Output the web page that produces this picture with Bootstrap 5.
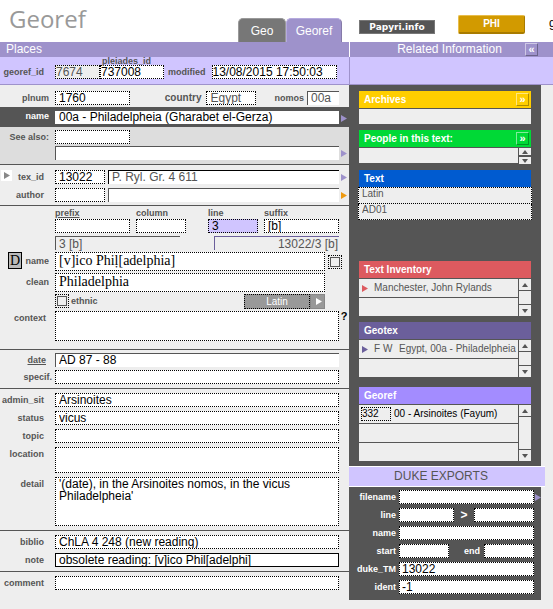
<!DOCTYPE html>
<html lang="en">
<head>
<meta charset="utf-8">
<meta name="viewport" content="width=device-width, initial-scale=1">
<title>Georef</title>
<link href="https://cdn.jsdelivr.net/npm/bootstrap@5.3.0/dist/css/bootstrap.min.css" rel="stylesheet">
<style>
:root{--violet:#9e92cb;--lilac:#d0c5ff;--dark:#555;--paper:#eee}
body{font:12px/14px "Liberation Sans",Arial,sans-serif;background:var(--paper);color:#000;overflow-x:hidden}
a{color:inherit;text-decoration:none}
button{border:0;padding:0;background:none;color:inherit;line-height:1}
svg{display:block}
.side{flex:0 0 204px;width:204px}
.main-col{flex:1 1 0;min-width:0}
/* header */
.top-bar{height:42px;background:#fff}
.brand{font:500 24px/38px "Open Sans","Noto Sans",sans-serif;color:#999;margin:0;padding-left:9px}
.tab{height:24px;line-height:25px;color:#fff;background:#777;border-radius:5px 5px 0 0;border:1px solid #999;border-width:1px 1px 0;text-align:center;width:48px}
.tab.on{width:56px;background:var(--violet);border-color:#b5aade #857aa8 #857aa8 #b5aade;margin-right:7px}
.site-links{padding-left:10px;overflow:hidden;white-space:nowrap;height:34px}
.papyri{font:bold 9px/12px "DejaVu Sans",sans-serif;color:#fff;background:var(--dark);border:1px solid #777;width:76px;height:14px;margin-right:23px}
.phi{font-size:10px;font-weight:bold;line-height:16px;color:#fff;background:#d29a00;border:1px solid #e8bd4a;border-bottom:2px solid #a87b00;border-right-color:#a87b00;border-radius:2px;width:67px;height:19px;margin-right:24px}
.cut{line-height:22px}
/* title bands */
.band{background:var(--violet);color:#fff;height:15px;line-height:15px}
.band.main-col{padding-left:6px}
.sub-band{background:var(--lilac);height:28px;border-bottom:1px solid var(--violet)}
.band.side{border-left:1px solid #fff;padding:0 15px 0 24px}
.sub-band.side{border-left:1px solid var(--violet)}
.sq{width:13px;height:13px;font-weight:bold;font-size:11px;line-height:9px;color:#fff;border:1px solid;border-color:#ffffff80 #00000050 #00000050 #ffffff80;flex:none}
/* form */
.lbl{font-size:9px;line-height:14px;font-weight:bold;color:var(--dark);white-space:nowrap}
.lead-lbl{width:55px;flex:none;text-align:right;padding-right:11px}
.lead-lbl.near{padding-right:6px}
.lead-lbl.ctx{padding-right:9px}
.lead-lbl.spec{padding-right:3px}
.fld{display:block;font:12px/12px "Liberation Sans",Arial,sans-serif;height:14px;padding:0 3px 1px;border:1px dotted #000;border-radius:0;background:#fff;color:#000;min-width:0;outline:0;resize:none;overflow:hidden}
.fld.tight{padding-left:0}
.fld.ink{border:1px solid var(--dark);border-width:1px 0 0 1px}
.fld.dim{color:var(--dark)}
.fld.lit{background:var(--lilac)}
.fld.locked{background:var(--paper)}
.fld.active-fld{border-style:solid}
.fld.black-top{border-color:#000}
.fld.serif{font:14px/17px "Liberation Serif","Times New Roman",serif;height:19px;padding-bottom:1px}
.grow{flex:1 1 0}
.w30{width:32px}.w45{width:45px}.w50{width:50px}.w55{width:55px}.w60{width:60px}.w65{width:64px}.w75{width:75px}
.h26{height:26px}.h30{height:30px}.h49{height:49px}
.tail{width:10px;flex:none;padding:4px 0 0 2px}
.violet{color:var(--violet)}.orange{color:#ee9a10}
.sec{display:flex;flex-direction:column;gap:4px;padding:4px 0;border-bottom:1px solid var(--dark)}
.frow{display:flex;align-items:flex-start}
.pleiades{line-height:8px;height:8px;padding-left:2px}
.modified{margin:0 2px}
.place{padding:6px 0 2px}
.country{font-size:10px;padding-right:5px}
.nomos{padding:0 3px 0 18px}
.name-bar{background:var(--dark);padding:4px 0 3px}
.name-bar .fld{height:13px;border:0;padding:0 4px 1px}
.name-bar .lbl{color:#fff;line-height:11px}
.also{background:#ddd;gap:2px;padding:3px 0 4px}
.text-sec{padding:5px 0 3px}
.text-sec .w50{margin-right:3px}
.mini{width:11px;height:11px;background:#fff;color:#888;padding:0 0 0 3px;margin-left:1px}
.lead-lbl.tex{width:43px}
.attest{gap:2px;padding:1px 0 8px}
.gap6{gap:6px}
.attest .w50>.lbl,.attest .w75>.lbl{display:block;line-height:12px}
.out{flex:0 0 125px;border-top:1px solid var(--dark);height:14px;padding:0 3px;color:var(--dark);margin-top:1px}
.border-dim{border-left:1px solid var(--dark)}
.border-violet{border-left:1px solid #6b5f9b;border-top-color:#6b5f9b;padding-right:1px}
.lbl.tall{line-height:18px}
.lead-lbl.beside{width:33px}
.box-tick{width:14px;height:14px;border:1px dotted #000;padding:1px;flex:none}
.box-tick input{appearance:none;display:block;width:10px;height:10px;margin:0;border:1px solid var(--dark);background:var(--paper)}
.side-tick{margin:3px 7px 0 3px}
.me-tick{margin-right:24px}
.eth .lbl{padding-left:2px}
.diac{font:14px/14px "Liberation Serif",serif;width:14px;height:17px;background:#bbb;border:1px solid #000;margin-left:8px}
.lang{appearance:none;font:10px/13px "Liberation Sans",sans-serif;width:66px;height:15px;background:#999;color:#fff;border:1px dotted #000;border-radius:0;padding:0;text-align:center}
.lang-go{width:15px;height:15px;background:#999;border:1px solid #888;padding-left:5px}
.help{color:#000;font-weight:bold;font-size:11px;padding:0}
.date-sec{gap:3px;padding-top:3px}
/* related panels */
.related{background:var(--dark);width:192px;padding:6px 10px 5px}
.cap-bar{height:17px;line-height:16px;padding:0 2px 0 5px;font-size:10px;font-weight:bold;color:#fff;margin:0 0 1px;display:flex;align-items:center;justify-content:space-between}
.gold{background:#ffce00}.green{background:#00d936}.blue{background:#005bd0}.red{background:#dd5a5f}.indigo{background:#6b5f9b}.lav{background:#a38cff}
.red-ink{color:#dd5a5f}.indigo-ink{color:#6b5f9b}
.gap-s{margin-top:6px}.gap-m{margin-top:10px}.gap-l{margin-top:41px}
.pane{display:flex;background:var(--dark);gap:1px;font-size:10px;color:var(--dark)}
.rows{flex:1;min-width:0;display:flex;flex-direction:column;gap:1px;margin:0;padding:0;list-style:none}
.rows li{height:18px;background:var(--paper);line-height:18px;white-space:nowrap;display:flex;align-items:center}
.rows.low li{height:15px}
.scr{width:12px;background:var(--paper);display:flex;flex-direction:column;justify-content:space-between}
.scr button{height:12px;display:flex;align-items:center;justify-content:center}
.scr button:first-child{border-bottom:1px solid var(--dark)}
.scr button:last-child{border-top:1px solid var(--dark)}
.scr.short button{height:8px}
.go{padding:0 6px 0 3px}
.fw-col{width:25px}
.ref-no{width:30px;font-size:10px;margin:0 3px 0 2px}
.meta{font-size:10px;background:var(--paper);color:var(--dark);height:17px;margin:0 -1px;width:174px;padding:0 3px 4px}
.meta+.meta{border-top:0;height:16px}
.duke-title{width:196px;height:21px;margin:0;background:var(--lilac);border:1px solid #fff;border-width:1px 0;font-size:12px;line-height:19px;font-weight:normal;color:var(--dark);text-align:center;padding-right:12px}
.duke{background:var(--dark);width:192px;padding:3px 0 6px;display:flex;flex-direction:column;gap:4px}
.duke .lbl{color:#fff}
.duke .lead-lbl{width:50px;padding-right:3px}
.duke .tail{width:7px;padding-left:1px}
.duke .pad2{padding-left:2px}
</style>
</head>
<body>
<svg width="0" height="0" class="position-absolute" aria-hidden="true">
  <symbol id="play" viewBox="0 0 6 7"><path d="M0 0L6 3.5L0 7Z" fill="currentColor"/></symbol>
  <symbol id="up" viewBox="0 0 6 4"><path d="M0 4L3 0L6 4Z" fill="currentColor"/></symbol>
  <symbol id="down" viewBox="0 0 6 4"><path d="M0 0L3 4L6 0Z" fill="currentColor"/></symbol>
</svg>

<header class="top-bar d-flex">
  <div class="main-col d-flex justify-content-between">
    <h1 class="brand">Georef</h1>
    <nav class="d-flex align-items-end" aria-label="Files"><a class="tab" href="#">Geo</a><a class="tab on" href="#">Georef</a></nav>
  </div>
  <div class="side site-links d-flex align-items-end">
    <button class="papyri flex-shrink-0">Papyri.info</button><button class="phi flex-shrink-0">PHI</button><span class="cut">g</span>
  </div>
</header>

<div class="d-flex">
  <div class="band main-col">Places</div>
  <div class="band side d-flex align-items-center"><span class="flex-grow-1 text-center">Related Information</span><button class="sq" aria-label="Collapse">«</button></div>
</div>
<div class="d-flex">
  <div class="sub-band main-col frow">
    <label class="lbl lead-lbl mt-2" for="gid">georef_id</label>
    <input class="fld tight dim locked w45 mt-2" id="gid" value="7674" readonly>
    <div class="w65"><label class="lbl d-block pleiades" for="pid">pleiades_id</label><input class="fld tight w-100" id="pid" value="737008"></div>
    <label class="lbl mt-2 px-1" for="mod">modified</label>
    <input class="fld tight grow mt-2 modified" id="mod" value="13/08/2015 17:50:03"><span class="tail"></span>
  </div>
  <div class="sub-band side"></div>
</div>

<div class="d-flex align-items-start">
<main class="main-col">
  <div class="frow place">
    <label class="lbl lead-lbl near" for="pln">plnum</label><input class="fld w75" id="pln" value="1760">
    <div class="grow d-flex justify-content-end">
      <label class="lbl country" for="cty">country</label><input class="fld dim w50" id="cty" value="Egypt">
      <label class="lbl nomos" for="nom">nomos</label><input class="fld ink dim w30" id="nom" value="00a">
    </div><span class="tail"></span>
  </div>
  <div class="frow name-bar">
    <label class="lbl lead-lbl near" for="nm">name</label><input class="fld grow" id="nm" value="00a - Philadelpheia (Gharabet el-Gerza)">
    <button class="tail violet" aria-label="Open place"><svg width="6" height="7"><use href="#play"/></svg></button>
  </div>
  <div class="sec also">
    <div class="frow"><label class="lbl lead-lbl near" for="sa">See also:</label><input class="fld w75" id="sa"></div>
    <div class="frow"><span class="lead-lbl"></span><input class="fld ink grow" aria-label="See also name"><button class="tail violet" aria-label="Open see also"><svg width="6" height="7"><use href="#play"/></svg></button></div>
  </div>
  <div class="sec text-sec">
    <div class="frow">
      <button class="mini" aria-label="Go to text"><svg width="6" height="7"><use href="#play"/></svg></button>
      <label class="lbl lead-lbl tex" for="tx">tex_id</label><input class="fld w50" id="tx" value="13022">
      <input class="fld ink dim grow black-top" aria-label="Text title" value="P. Ryl. Gr. 4 611"><button class="tail violet" aria-label="Open text"><svg width="6" height="7"><use href="#play"/></svg></button>
    </div>
    <div class="frow"><label class="lbl lead-lbl" for="au">author</label><input class="fld w50" id="au"><input class="fld ink grow" aria-label="Author name"><button class="tail orange" aria-label="Open author"><svg width="6" height="7"><use href="#play"/></svg></button></div>
  </div>

  <div class="sec attest">
    <div class="frow"><span class="lead-lbl"></span>
      <div class="grow d-flex justify-content-between">
        <div class="d-flex gap6">
          <div class="w75"><label class="lbl text-decoration-underline" for="pre">prefix</label><input class="fld w-100" id="pre"></div>
          <div class="w50"><label class="lbl" for="clm">column</label><input class="fld w-100" id="clm"></div>
        </div>
        <div class="d-flex gap6">
          <div class="w50"><label class="lbl" for="lin">line</label><input class="fld w-100 lit" id="lin" value="3"></div>
          <div class="w75"><label class="lbl" for="suf">suffix</label><input class="fld w-100" id="suf" value="[b]"></div>
        </div>
      </div><span class="tail"></span>
    </div>
    <div class="frow"><span class="lead-lbl"></span>
      <div class="grow d-flex justify-content-between"><output class="out border-dim">3 [b]</output><output class="out border-violet text-end">13022/3 [b]</output></div><span class="tail"></span>
    </div>
    <div class="frow">
      <button class="diac">D</button><label class="lbl lead-lbl near beside tall" for="an">name</label>
      <input class="fld serif grow" id="an" value="[v]ico Phiḷ[adelphia]">
      <span class="box-tick side-tick"><input type="checkbox" aria-label="Name checked"></span>
    </div>
    <div class="frow"><label class="lbl lead-lbl near tall" for="cl">clean</label><input class="fld serif grow me-tick" id="cl" value="Philadelphia"></div>
    <div class="frow eth"><span class="lead-lbl"></span>
      <span class="box-tick"><input type="checkbox" id="eth"></span><label class="lbl" for="eth">ethnic</label>
      <select class="lang ms-auto" aria-label="Language"><option>Latin</option></select><button class="lang-go me-tick" aria-label="Next language"><svg width="6" height="7" class="text-white"><use href="#play"/></svg></button>
    </div>
    <div class="frow"><label class="lbl lead-lbl ctx" for="ctx">context</label><textarea class="fld grow h30" id="ctx"></textarea><button class="tail help">?</button></div>
  </div>

  <div class="sec date-sec">
    <div class="frow"><label class="lbl lead-lbl ctx text-decoration-underline" for="dt">date</label><input class="fld ink grow" id="dt" value="AD 87 - 88"><span class="tail"></span></div>
    <div class="frow"><label class="lbl lead-lbl spec" for="sp">specif.</label><input class="fld grow" id="sp"><span class="tail"></span></div>
  </div>
  <div class="sec">
    <div class="frow"><label class="lbl lead-lbl" for="ad">admin_sit</label><input class="fld grow" id="ad" value="Arsinoites"><span class="tail"></span></div>
    <div class="frow"><label class="lbl lead-lbl" for="st">status</label><input class="fld grow" id="st" value="vicus"><span class="tail"></span></div>
    <div class="frow"><label class="lbl lead-lbl" for="to">topic</label><input class="fld grow" id="to"><span class="tail"></span></div>
    <div class="frow"><label class="lbl lead-lbl" for="lo">location</label><textarea class="fld grow h26" id="lo"></textarea><span class="tail"></span></div>
    <div class="frow"><label class="lbl lead-lbl" for="de">detail</label><textarea class="fld grow h49" id="de">'(date), in the Arsinoites nomos, in the vicus Philadelpheia'</textarea><span class="tail"></span></div>
  </div>
  <div class="sec">
    <div class="frow"><label class="lbl lead-lbl" for="bi">biblio</label><input class="fld grow" id="bi" value="ChLA 4 248 (new reading)"><span class="tail"></span></div>
    <div class="frow"><label class="lbl lead-lbl" for="no">note</label><input class="fld grow active-fld" id="no" value="obsolete reading: [v]ico Phil[adelphi]"><span class="tail"></span></div>
  </div>
  <div class="sec border-0">
    <div class="frow"><label class="lbl lead-lbl" for="co">comment</label><input class="fld grow" id="co"><span class="tail"></span></div>
  </div>
</main>

<aside class="side">
  <div class="related">
    <section><h2 class="cap-bar gold">Archives<button class="sq" aria-label="Open archives">»</button></h2>
      <div class="pane"><ul class="rows low"><li></li></ul></div></section>
    <section class="gap-s"><h2 class="cap-bar green">People in this text:<button class="sq" aria-label="Open people">»</button></h2>
      <div class="pane"><ul class="rows low"><li></li></ul>
        <div class="scr short"><button aria-label="Up"><svg width="6" height="4"><use href="#up"/></svg></button><button aria-label="Down"><svg width="6" height="4"><use href="#down"/></svg></button></div></div></section>
    <section class="gap-s"><h2 class="cap-bar blue mb-0">Text</h2>
      <input class="fld meta" aria-label="Language of text" value="Latin"><input class="fld meta" aria-label="Date code" value="AD01"></section>
    <section class="gap-l"><h2 class="cap-bar red">Text Inventory</h2>
      <div class="pane"><ul class="rows"><li><a class="go red-ink" href="#" aria-label="Open inventory"><svg width="6" height="7"><use href="#play"/></svg></a>Manchester, John Rylands</li><li></li></ul>
        <div class="scr"><button aria-label="Up"><svg width="6" height="4"><use href="#up"/></svg></button><button aria-label="Down"><svg width="6" height="4"><use href="#down"/></svg></button></div></div></section>
    <section class="gap-s"><h2 class="cap-bar indigo">Geotex</h2>
      <div class="pane"><ul class="rows"><li><a class="go indigo-ink" href="#" aria-label="Open geotex"><svg width="6" height="7"><use href="#play"/></svg></a><span class="fw-col">F W</span>Egypt, 00a - Philadelpheia</li><li></li></ul>
        <div class="scr"><button aria-label="Up"><svg width="6" height="4"><use href="#up"/></svg></button><button aria-label="Down"><svg width="6" height="4"><use href="#down"/></svg></button></div></div></section>
    <section class="gap-m"><h2 class="cap-bar lav">Georef</h2>
      <div class="pane"><ul class="rows text-black"><li><input class="fld tight locked ref-no" aria-label="Georef number" value="332">00 - Arsinoites (Fayum)</li><li></li><li></li></ul>
        <div class="scr"><button aria-label="Up"><svg width="6" height="4"><use href="#up"/></svg></button><button aria-label="Down"><svg width="6" height="4"><use href="#down"/></svg></button></div></div></section>
  </div>
  <h2 class="duke-title">DUKE EXPORTS</h2>
  <div class="duke">
    <div class="frow"><label class="lbl lead-lbl" for="fn">filename</label><input class="fld grow" id="fn"><button class="tail violet" aria-label="Open file"><svg width="6" height="7"><use href="#play"/></svg></button></div>
    <div class="frow"><label class="lbl lead-lbl" for="dl">line</label><input class="fld w55" id="dl"><span class="grow text-center text-white fw-bold">&gt;</span><input class="fld w60" aria-label="Last line"><span class="tail"></span></div>
    <div class="frow"><label class="lbl lead-lbl" for="dn">name</label><input class="fld grow" id="dn"><span class="tail"></span></div>
    <div class="frow"><label class="lbl lead-lbl" for="ds">start</label><input class="fld w50" id="ds"><label class="lbl grow text-end pe-1" for="dd">end</label><input class="fld w50" id="dd"><span class="tail"></span></div>
    <div class="frow"><label class="lbl lead-lbl" for="dm">duke_TM</label><input class="fld grow pad2" id="dm" value="13022"><span class="tail"></span></div>
    <div class="frow"><label class="lbl lead-lbl" for="di">ident</label><input class="fld grow pad2" id="di" value="-1"><span class="tail"></span></div>
  </div>
</aside>
</div>
<script src="https://cdn.jsdelivr.net/npm/bootstrap@5.3.0/dist/js/bootstrap.bundle.min.js"></script>
</body>
</html>
